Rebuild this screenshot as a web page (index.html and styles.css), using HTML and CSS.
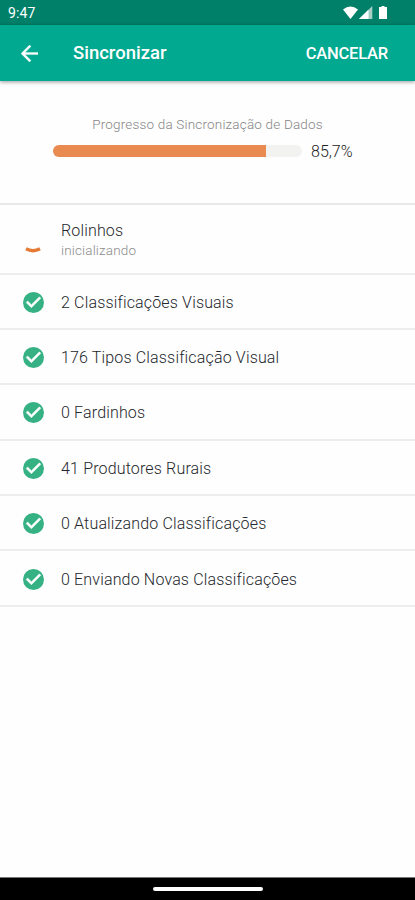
FILE: index.html
```html
<!DOCTYPE html>
<html lang="pt-BR">
<head>
<meta charset="utf-8">
<meta name="viewport" content="width=device-width, initial-scale=1">
<title>Sincronizar</title>
<link rel="stylesheet" href="styles.css">
</head>
<body>
<svg width="0" height="0" class="defs">
  <symbol id="check" viewBox="2 2 20 20"><path fill="#35b184" d="M12 2a10 10 0 1 0 0 20 10 10 0 0 0 0-20z"/><path fill="#fff" stroke="#fff" stroke-width=".5" d="M10 17l-5-5 1.410-1.410L10 14.170l7.590-7.590L19 8z"/></symbol>
</svg>
<div class="status">
  <span class="time">9:47</span>
  <svg class="signals" width="46" height="16" viewBox="0 0 46 16">
    <path fill="#fff" d="M1 4.400Q8.500-1.400 16 4.400L8.500 14z"/>
    <path fill="#a5cfc4" d="M30.300 1v13H17z"/>
    <path fill="#fff" d="M26.500 4.700V14H17z"/>
    <path fill="#fff" d="M37 2h2.500V.9h3V2H45v12h-8V2z"/>
  </svg>
</div>
<header class="bar">
  <svg class="back" width="17" height="17" viewBox="4 4 16 16"><path fill="#fff" d="M20 11H7.830l5.590-5.590L12 4l-8 8 8 8 1.410-1.410L7.830 13H20z" stroke="#fff" stroke-width=".3"/></svg>
  <h1>Sincronizar</h1>
  <button>CANCELAR</button>
</header>
<main>
  <section class="progress">
    <p>Progresso da Sincronização de Dados</p>
    <div class="meter"><div class="track"><div class="fill"></div></div><span>85,7%</span></div>
  </section>
  <ul>
    <li class="active"><svg class="spinner" width="18" height="18" viewBox="0 0 18 18"><path d="M2 12.800Q9 16.600 16 12.800" fill="none" stroke="#e57a35" stroke-width="3.400"/></svg><div><span>Rolinhos</span><small>inicializando</small></div></li>
    <li><svg class="ok"><use href="#check"/></svg><span>2 Classificações Visuais</span></li>
    <li><svg class="ok"><use href="#check"/></svg><span>176 Tipos Classificação Visual</span></li>
    <li><svg class="ok"><use href="#check"/></svg><span>0 Fardinhos</span></li>
    <li><svg class="ok"><use href="#check"/></svg><span>41 Produtores Rurais</span></li>
    <li><svg class="ok"><use href="#check"/></svg><span>0 Atualizando Classificações</span></li>
    <li><svg class="ok"><use href="#check"/></svg><span>0 Enviando Novas Classificações</span></li>
  </ul>
</main>
<nav class="gesture"><i></i></nav>
</body>
</html>
```
FILE: styles.css
```css
* { box-sizing: border-box; margin: 0; padding: 0; }
body { height: 900px; display: flex; flex-direction: column; background: #fefefe; color: #24272c; font-family: Roboto, sans-serif; overflow: hidden; }
.defs { display: none; }
.status { height: 25px; flex: none; background: #008069; color: #fff; display: flex; justify-content: space-between; align-items: center; padding: 1px 27px 0 8px; }
.time { font-size: 14px; letter-spacing: 0.1px; }
.bar { height: 56px; flex: none; background: #00a98f; color: #fff; display: flex; align-items: center; padding: 0 27px 0 21px; box-shadow: 0 1px 4px rgba(0, 0, 0, .4); }
.bar h1 { font-size: 18.500px; font-weight: 500; margin-left: 35px; flex: 1; }
.bar button { font: 500 16.500px Roboto, sans-serif; letter-spacing: -0.2px; color: #fff; background: none; border: 0; }
main { flex: 1; }
.progress { height: 123.500px; border-bottom: 2px solid #e9e9e9; padding-top: 35px; }
.progress p { font-size: 13.500px; font-weight: 300; letter-spacing: 0.18px; line-height: 17px; color: #868686; text-align: center; }
.meter { display: flex; align-items: center; gap: 9px; margin: 8px 0 0 53px; height: 20px; }
.meter span { font-size: 16px; font-weight: 300; color: #222; }
.track { width: 249px; height: 12px; border-radius: 6px; overflow: hidden; background: #f2f2f1; }
.fill { width: 85.700%; height: 100%; background: #e98a50; }
ul { list-style: none; }
li { height: 55.400px; border-bottom: 2px solid #ededed; display: flex; align-items: center; padding: 2px 0 0 23px; font-size: 16px; font-weight: 300; letter-spacing: 0.16px; }
.ok { width: 21px; height: 21px; margin-right: 17px; flex: none; }
.active { height: 70px; }
.spinner { margin: 10px 19px 0 1px; }
.active div { display: flex; flex-direction: column; }
.active div span { line-height: 21px; }
.active small { font-size: 13.500px; line-height: 19px; color: #8c8c8c; }
.gesture { height: 23px; flex: none; background: #000; border-top: 1px solid #777; display: flex; align-items: center; justify-content: center; }
.gesture i { width: 110px; height: 4px; border-radius: 2px; background: #fff; }
```
